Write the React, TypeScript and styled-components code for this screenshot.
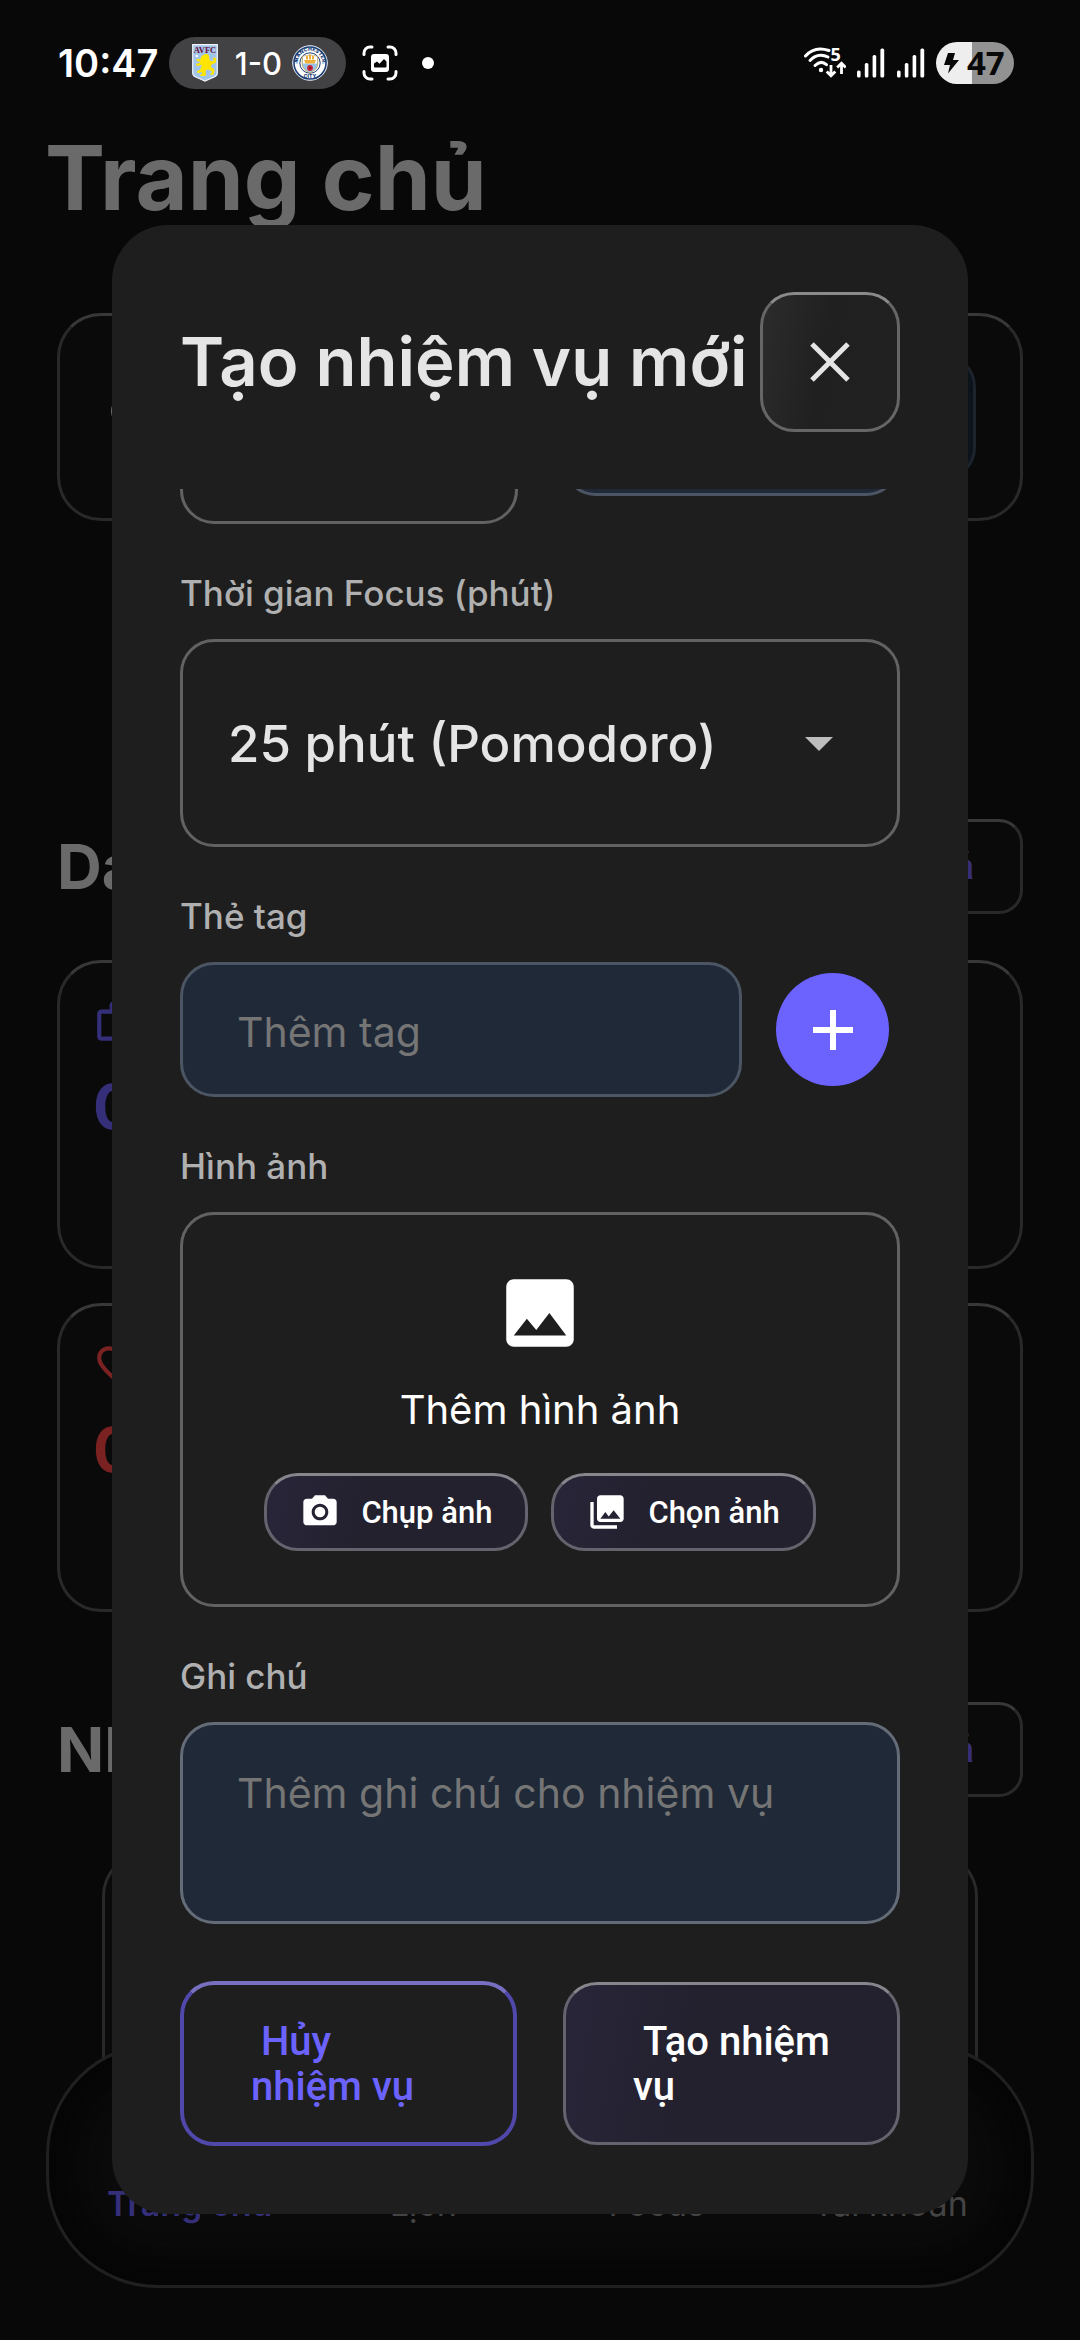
import React from "react";
import styled, { createGlobalStyle, css } from "styled-components";

const GlobalStyle = createGlobalStyle`
  *, *::before, *::after { box-sizing: border-box; }
  body { margin: 0; background: #080808; }
  h1, h2, p { margin: 0; }
  body, input, select, textarea {
    font-family: Inter, Roboto, "Noto Sans", sans-serif;
  }
  button {
    font-family: Roboto, "Noto Sans", sans-serif;
  }
`;

const Screen = styled.div`
  position: relative;
  min-height: 100vh;
  overflow: hidden;
  background: #080808;
  color: #6a6a6a;
`;

/* ---------- status bar ---------- */

const StatusBar = styled.header`
  display: flex;
  align-items: center;
  height: 122px;
  padding: 4px 66px 0 58px;
  color: #fff;
`;

const Clock = styled.time`
  font-size: 38px;
  font-weight: 600;
  line-height: 48px;
`;

const ScorePill = styled.div`
  display: flex;
  align-items: center;
  width: 177px;
  height: 52px;
  margin: 0 16px 0 11px;
  padding: 0 18px 0 23px;
  border-radius: 26px;
  background: #424144;
  font-size: 31px;
  font-weight: 500;
`;

const Score = styled.span`
  flex: 1;
  padding-left: 6px;
  text-align: center;
`;

const Dot = styled.span`
  width: 12px;
  height: 12px;
  margin-left: 24px;
  border-radius: 50%;
  background: #fff;
`;

const StatusRight = styled.div`
  display: flex;
  align-items: center;
  gap: 10px;
  margin-left: auto;
`;

const Battery = styled.div`
  display: flex;
  align-items: center;
  gap: 8px;
  width: 78px;
  height: 42px;
  padding-left: 8px;
  border-radius: 21px;
  background: linear-gradient(90deg, #eee 46%, #929292 46%);
  color: #080808;
  font-family: "Open Sans", "Noto Sans", sans-serif;
  font-size: 33px;
  font-weight: 700;
  line-height: 42px;
`;

/* ---------- home page ---------- */

const Home = styled.main`
  padding: 0 57px;
`;

const PageTitle = styled.h1`
  padding: 0 45px;
  font-size: 90px;
  font-weight: 700;
  line-height: 112px;
`;

const glassCard = css`
  border: 3px solid #292929;
  border-top-color: #383838;
  background: #0a0a0a;
`;

const SearchCard = styled.section`
  ${glassCard}
  display: flex;
  align-items: center;
  justify-content: space-between;
  height: 208px;
  margin-top: 79px;
  padding: 0 44px;
  border-radius: 44px;
`;

const SearchBox = styled.span`
  width: 200px;
  height: 128px;
  border: 3px solid #1d242d;
  border-radius: 34px;
  background: #0c131b;
`;

const SectionHead = styled.div<{ $space: number }>`
  display: flex;
  align-items: center;
  justify-content: space-between;
  margin-top: ${(p) => p.$space}px;
`;

const SectionTitle = styled.h2`
  font-size: 62px;
  font-weight: 700;
  line-height: 80px;
`;

const AllButton = styled.button`
  ${glassCard}
  height: 95px;
  padding: 0 46px;
  border-radius: 24px;
  color: #352f7a;
  font-size: 37px;
  font-weight: 600;
`;

const StatList = styled.div`
  display: grid;
  gap: 34px;
  margin-top: 46px;
`;

const StatCard = styled.article<{ $color: string }>`
  ${glassCard}
  height: 309px;
  padding: 34px 33px;
  border-radius: 44px;
  color: ${(p) => p.$color};
`;

const StatValue = styled.p`
  margin-top: 20px;
  font-size: 62px;
  font-weight: 700;
  line-height: 80px;
`;

const TaskCard = styled.article`
  ${glassCard}
  height: 300px;
  margin: 55px 45px 0;
  border-radius: 44px;
`;

const BottomNav = styled.nav`
  position: absolute;
  right: 46px;
  bottom: 52px;
  left: 46px;
  display: grid;
  grid-template-columns: repeat(4, 1fr);
  align-items: end;
  height: 245px;
  padding: 0 24px 57px;
  border: 3px solid #202020;
  border-radius: 112px;
  background: #0b0b0b;
  box-shadow: inset 0 0 40px 26px #050505;
`;

const NavLink = styled.a<{ $active?: boolean }>`
  color: ${(p) => (p.$active ? "#352f7a" : "#444")};
  font-size: 34px;
  font-weight: ${(p) => (p.$active ? 600 : 400)};
  line-height: 48px;
  text-align: center;
  text-decoration: none;
`;

/* ---------- dialog ---------- */

const Overlay = styled.div`
  position: absolute;
  inset: 0;
  display: flex;
  padding: 225px 112px 126px;
`;

const Dialog = styled.form`
  display: flex;
  flex: 1;
  flex-direction: column;
  gap: 57px;
  min-width: 0;
  padding: 67px 68px 68px;
  border-radius: 56px;
  background: #1e1e1e;
  color: #e5e5e5;
`;

const DialogHead = styled.div`
  display: flex;
  align-items: center;
  justify-content: space-between;
`;

const DialogTitle = styled.h2`
  font-size: 67px;
  font-weight: 600;
  line-height: 88px;
  white-space: nowrap;
`;

const CloseButton = styled.button`
  display: grid;
  flex: none;
  place-items: center;
  width: 140px;
  height: 140px;
  padding: 0;
  border: 3px solid #666;
  border-top-color: #8a8a8a;
  border-radius: 34px;
  background: linear-gradient(100deg, #2c2c2c, #202020 45%, #212121);
  color: #e5e5e5;
`;

const Fields = styled.div`
  display: flex;
  flex: 1;
  flex-direction: column;
  justify-content: flex-end;
  gap: 45px;
  min-height: 0;
  overflow: hidden;
`;

const Field = styled.div`
  display: flex;
  flex: none;
  flex-direction: column;
  gap: 22px;
`;

const labelText = css`
  color: #b0b0b0;
  font-size: 35px;
  font-weight: 500;
  line-height: 48px;
`;

const Label = styled.label`
  ${labelText}
`;

const GroupLabel = styled.span`
  ${labelText}
`;

const Pair = styled.div<{ $gap: number }>`
  display: grid;
  flex: none;
  grid-template-columns: 1fr 1fr;
  gap: ${(p) => p.$gap}px;
  align-items: center;
`;

const SelectWrap = styled.div`
  position: relative;
`;

const Select = styled.select`
  display: block;
  width: 100%;
  height: 208px;
  padding: 0 110px 0 45px;
  border: 3px solid #626262;
  border-radius: 34px;
  appearance: none;
  background: #1e1e1e;
  color: #e5e5e5;
  font-size: 51px;
  font-weight: 500;
`;

const Caret = styled.svg`
  position: absolute;
  top: 98px;
  right: 67px;
  pointer-events: none;
`;

const textBox = css`
  width: 100%;
  min-width: 0;
  border: 3px solid #4b5563;
  border-radius: 34px;
  background: #1f2937;
  color: #e5e5e5;
  font-size: 41px;
  &::placeholder { color: #757575; opacity: 1; }
`;

const TextInput = styled.input<{ $height: number }>`
  ${textBox}
  height: ${(p) => p.$height}px;
  padding: 4px 54px 0;
`;

const Notes = styled.textarea`
  ${textBox}
  display: block;
  height: 202px;
  padding: 40px 54px;
  border-color: #646c78;
  line-height: 56px;
  resize: none;
`;

const TagRow = styled.div`
  display: flex;
  align-items: center;
  gap: 34px;
  padding-right: 11px;
`;

const AddButton = styled.button`
  display: grid;
  flex: none;
  place-items: center;
  width: 113px;
  height: 113px;
  padding: 0;
  border: 0;
  border-radius: 50%;
  background: #6c63ff;
  color: #fff;
`;

const ImageBox = styled.div`
  display: flex;
  flex-direction: column;
  align-items: center;
  padding: 53px 0;
  border: 3px solid #626262;
  border-radius: 34px;
  color: #fff;
`;

const ImageText = styled.p`
  margin: 24px 0 35px;
  font-size: 40px;
  line-height: 56px;
`;

const ImageActions = styled.div`
  display: flex;
  gap: 23px;
`;

const violetGlass = css`
  border: 3px solid #66636f;
  border-top-color: #88868d;
  background: linear-gradient(100deg, #282539, #23212e 40%, #23212e);
  color: #fff;
`;

const ImageButton = styled.button`
  ${violetGlass}
  display: flex;
  align-items: center;
  gap: 21px;
  height: 78px;
  padding: 0 33px;
  border-radius: 34px;
  font-size: 31px;
  font-weight: 500;
`;

const FooterButton = styled.button<{ $primary?: boolean }>`
  height: 165px;
  padding: 0 0 0 67px;
  border: 4px solid #5048ab;
  border-top-color: #776fc0;
  border-radius: 34px;
  background: #1e1e1e;
  color: #6c63ff;
  font-size: 40px;
  font-weight: 500;
  line-height: 45px;
  text-align: left;
  white-space: pre-wrap;
  ${(p) =>
    p.$primary &&
    css`
      ${violetGlass}
      height: 163px;
    `}
`;

/* ---------- drawings ---------- */

const VillaCrest = () => (
  <svg width="26" height="38" viewBox="0 0 26 38" aria-hidden="true">
    <path d="M.7.7h24.6v28.5c0 3-2.5 3.8-6 5L13 37l-6.300-2.800c-3.500-1.200-6-2-6-5z" fill="#a3c5e9" stroke="#f2f5fa" strokeWidth="1.200" />
    <text x="13" y="8.500" fontFamily="Liberation Serif, serif" fontWeight="700" fontSize="8.500" textAnchor="middle" fill="#6b0f3c">AVFC</text>
    <circle cx="4.800" cy="12" r="1.200" fill="#fff" />
    <path
      d="M12 10.500c2-1 4.500-.5 5 1.500l.3 2.500c.2 1.500 1.200 2.500 2.400 2.700l2-.6c-.8-1.500-.8-2.800.8-3.300 1.200.4 2 2 1.700 3.800-.3 2-2 3-4.200 3.100-.8 1-1.200 2-.8 3l2.500 1.500c1 .8 1 2 .5 3.200l-.6 2.700-3 .3-.3-1.300 1.600-.8-.2-1.700-3.600-1.700-2 .6-.6 2.200.6 2.200-1 1.700H8.300l-.3-1.300 2.200-1-.6-2-2.800 1.500-2-1 .6-1.600 2.700-1 1.600-3.600-.2-1.300-3.300 1.200-2.300-1 .3-1.400 2.200-.1 2.500-1.800-3.500-.5-1.300-1.600 1.600-.8 2.700.6c.2-1.800.8-3.800 3.600-4.700z"
      fill="#ffe500"
    />
  </svg>
);

const CityCrest = () => (
  <svg width="36" height="36" viewBox="0 0 36 36" aria-hidden="true">
    <defs>
      <path id="ring-top" d="M5.800 18a12.200 12.200 0 0 1 24.400 0" />
    </defs>
    <circle cx="18" cy="18" r="17.300" fill="#fff" stroke="#dce6f0" strokeWidth="1" />
    <circle cx="18" cy="18" r="16" fill="#fff" stroke="#1c3f77" strokeWidth="1.600" />
    <text fontFamily="Inter, sans-serif" fontWeight="800" fontSize="5.200" fill="#1c3f77">
      <textPath href="#ring-top" startOffset="50%" textAnchor="middle">MANCHESTER</textPath>
    </text>
    <text x="18" y="33" fontFamily="Inter, sans-serif" fontWeight="800" fontSize="5" textAnchor="middle" fill="#1c3f77">CITY</text>
    <circle cx="18" cy="18" r="10.200" fill="#fff" stroke="#1c3f77" strokeWidth="1" />
    <path d="M10.200 11.500q7.800-3 15.600 0v7c0 5-4 7.500-7.800 9.500-3.800-2-7.800-4.500-7.800-9.500z" fill="#98c5e9" stroke="#c9a24a" strokeWidth=".8" />
    <path d="M11 11.800q7-2.600 14 0v6.700H11z" fill="#fff" />
    <path d="M12 15h12l-1.500 3.500h-9zM14 11h2v3.500h-2zM17 9.500h2V14.500h-2zM20 11h2v3.500h-2z" fill="#eeb13d" />
    <circle cx="18" cy="23" r="2.900" fill="#c8233a" />
    <circle cx="18" cy="23" r="1" fill="#7c1422" />
    <path d="M3.500 18h2.500M30 18h2.500" stroke="#98c5e9" strokeWidth="1.500" />
  </svg>
);

const CaptureIcon = () => (
  <svg width="36" height="36" viewBox="0 0 36 36" fill="none" aria-hidden="true">
    <path d="M2 9.500V8a6 6 0 0 1 6-6h2M26 2h2a6 6 0 0 1 6 6v1.500M34 26.500V28a6 6 0 0 1-6 6h-2M10 34H8a6 6 0 0 1-6-6v-1.500" stroke="#fff" strokeWidth="3" strokeLinecap="round" />
    <path fillRule="evenodd" d="M12 9h12a3 3 0 0 1 3 3v12a3 3 0 0 1-3 3H12a3 3 0 0 1-3-3V12a3 3 0 0 1 3-3zm0 9.500l3-2 2.500 2.300 4.500-4.800 2.500 2.500v-.5a3 3 0 0 0 0 0v5.500a1 1 0 0 1-1 1H13a1 1 0 0 1-1-1z" fill="#fff" />
  </svg>
);

const WifiIcon = () => (
  <svg width="42" height="44" viewBox="0 -6 42 44" fill="none" aria-hidden="true">
    <g stroke="#fff" strokeWidth="3" strokeLinecap="round">
      <path d="M1.500 9C8 1.500 17 .8 25 3.500" />
      <path d="M6 13.500c5-5.500 12-6.500 18-3.500" />
      <path d="M11 18.500c4-4 8-4 11.500-.8" />
    </g>
    <circle cx="17" cy="23" r="2.200" fill="#fff" />
    <text x="26.500" y="14" fontFamily="Open Sans, sans-serif" fontWeight="700" fontSize="18" fill="#fff">5</text>
    <g stroke="#fff" strokeWidth="2.800">
      <path d="M27 18v11M22.700 24.500l4.300 4.300 4.300-4.300M37.500 27V17M33.200 20.500l4.300-4.300 4.300 4.300" />
    </g>
  </svg>
);

const SignalIcon = () => (
  <svg width="30" height="30" viewBox="0 0 30 30" aria-hidden="true">
    <g fill="#fff">
      <rect x="1" y="22.500" width="3.600" height="7" rx="1.500" />
      <rect x="8.800" y="15" width="3.600" height="14.500" rx="1.500" />
      <rect x="16.600" y="7" width="3.600" height="22.500" rx="1.500" />
      <rect x="24.400" y=".5" width="3.800" height="29" rx="1.500" />
    </g>
  </svg>
);

const BoltIcon = () => (
  <svg width="15" height="22" viewBox="0 0 15 22" aria-hidden="true">
    <path d="M4 1h7L9 8h6L4 21.500l2-8.500H0z" fill="#080808" />
  </svg>
);

const icons = {
  work: "M14 6V4h-4v2h4zM4 8v11h16V8H4zm16-2c1.110 0 2 .89 2 2v11c0 1.110-.89 2-2 2H4c-1.110 0-2-.89-2-2l.01-11c0-1.110.88-2 1.990-2h4V4c0-1.110.89-2 2-2h4c1.110 0 2 .89 2 2v2h4z",
  heart:
    "M16.500 3c-1.740 0-3.410.81-4.500 2.090C10.910 3.810 9.240 3 7.500 3 4.420 3 2 5.420 2 8.500c0 3.780 3.400 6.860 8.550 11.540L12 21.350l1.450-1.320C18.600 15.360 22 12.280 22 8.500 22 5.420 19.580 3 16.500 3zm-4.400 15.550l-.1.100-.1-.1C7.140 14.240 4 11.390 4 8.500 4 6.500 5.500 5 7.500 5c1.540 0 3.040.99 3.570 2.360h1.870C13.460 5.990 14.960 5 16.500 5c2 0 3.500 1.500 3.500 3.500 0 2.890-3.140 5.740-7.900 10.050z",
  search:
    "M15.500 14h-.79l-.28-.27C15.410 12.590 16 11.110 16 9.500 16 5.910 13.090 3 9.500 3S3 5.910 3 9.500 5.910 16 9.500 16c1.610 0 3.090-.59 4.230-1.570l.27.28v.79l5 4.990L20.490 19l-4.990-5zm-6 0C7.010 14 5 11.990 5 9.500S7.010 5 9.500 5 14 7.010 14 9.500 11.990 14 9.500 14z",
  image:
    "M21 19V5c0-1.100-.9-2-2-2H5c-1.100 0-2 .9-2 2v14c0 1.100.9 2 2 2h14c1.100 0 2-.9 2-2zM8.500 13.500l2.500 3.010L14.500 12l4.500 6H5l3.500-4.500z",
  camera:
    "M12 8.800a3.200 3.200 0 1 0 0 6.400 3.200 3.200 0 1 0 0-6.400zM9 2L7.170 4H4c-1.100 0-2 .9-2 2v12c0 1.100.9 2 2 2h16c1.100 0 2-.9 2-2V6c0-1.100-.9-2-2-2h-3.170L15 2H9zm3 15c-2.760 0-5-2.240-5-5s2.240-5 5-5 5 2.240 5 5-2.240 5-5 5z",
  library:
    "M22 16V4c0-1.100-.9-2-2-2H8c-1.100 0-2 .9-2 2v12c0 1.100.9 2 2 2h12c1.100 0 2-.9 2-2zm-11-4l2.030 2.710L16 11l4 5H8l3-4zM2 6v14c0 1.100.9 2 2 2h14v-2H4V6H2z",
};

const Icon = ({ name, size }: { name: keyof typeof icons; size: number }) => (
  <svg width={size} height={size} viewBox="0 0 24 24" fill="currentColor" aria-hidden="true">
    <path d={icons[name]} />
  </svg>
);

const BlockIcon = styled.div`
  height: 50px;
  line-height: 0;
`;

export default function App() {
  return (
    <Screen>
      <GlobalStyle />
      <StatusBar>
        <Clock>10:47</Clock>
        <ScorePill>
          <VillaCrest />
          <Score>1-0</Score>
          <CityCrest />
        </ScorePill>
        <CaptureIcon />
        <Dot />
        <StatusRight>
          <WifiIcon />
          <SignalIcon />
          <SignalIcon />
          <Battery>
            <BoltIcon />
            <span>47</span>
          </Battery>
        </StatusRight>
      </StatusBar>

      <PageTitle>Trang chủ</PageTitle>
      <Home>
        <SearchCard>
          <Icon name="search" size={56} />
          <SearchBox />
        </SearchCard>

        <SectionHead $space={298}>
          <SectionTitle>Da</SectionTitle>
          <AllButton type="button">Tất cả</AllButton>
        </SectionHead>
        <StatList>
          <StatCard $color="#352f7a">
            <BlockIcon><Icon name="work" size={50} /></BlockIcon>
            <StatValue>0</StatValue>
          </StatCard>
          <StatCard $color="#7a2121">
            <BlockIcon><Icon name="heart" size={50} /></BlockIcon>
            <StatValue>0</StatValue>
          </StatCard>
        </StatList>

        <SectionHead $space={90}>
          <SectionTitle>Nh</SectionTitle>
          <AllButton type="button">Tất cả</AllButton>
        </SectionHead>
        <TaskCard />
      </Home>

      <BottomNav>
        <NavLink href="#home" $active>Trang chủ</NavLink>
        <NavLink href="#calendar">Lịch</NavLink>
        <NavLink href="#focus">Focus</NavLink>
        <NavLink href="#account">Tài khoản</NavLink>
      </BottomNav>

      <Overlay>
        <Dialog role="dialog" aria-labelledby="dialog-title" onSubmit={(e: React.FormEvent) => e.preventDefault()}>
          <DialogHead>
            <DialogTitle id="dialog-title">Tạo nhiệm vụ mới</DialogTitle>
            <CloseButton type="button" aria-label="Đóng">
              <svg width="40" height="40" viewBox="0 0 40 40" aria-hidden="true">
                <path d="M2 2l36 36M38 2L2 38" stroke="currentColor" strokeWidth="5" />
              </svg>
            </CloseButton>
          </DialogHead>

          <Fields>
            <Pair $gap={44}>
              <Select aria-label="Ưu tiên" />
              <TextInput $height={152} aria-label="Hạn chót" />
            </Pair>

            <Field>
              <Label htmlFor="focus-time">Thời gian Focus (phút)</Label>
              <SelectWrap>
                <Select id="focus-time" defaultValue="25">
                  <option value="25">25 phút (Pomodoro)</option>
                </Select>
                <Caret width="28" height="14" viewBox="0 0 28 14" aria-hidden="true">
                  <path d="M0 0h28L14 14z" fill="#bdbdbd" />
                </Caret>
              </SelectWrap>
            </Field>

            <Field>
              <Label htmlFor="tag">Thẻ tag</Label>
              <TagRow>
                <TextInput $height={135} id="tag" placeholder="Thêm tag" />
                <AddButton type="button" aria-label="Thêm tag">
                  <svg width="40" height="40" viewBox="0 0 40 40" aria-hidden="true">
                    <path d="M20 0v40M0 20h40" stroke="currentColor" strokeWidth="6" />
                  </svg>
                </AddButton>
              </TagRow>
            </Field>

            <Field role="group" aria-labelledby="image-label">
              <GroupLabel id="image-label">Hình ảnh</GroupLabel>
              <ImageBox>
                <Icon name="image" size={90} />
                <ImageText>Thêm hình ảnh</ImageText>
                <ImageActions>
                  <ImageButton type="button">
                    <Icon name="camera" size={40} />
                    Chụp ảnh
                  </ImageButton>
                  <ImageButton type="button">
                    <Icon name="library" size={40} />
                    Chọn ảnh
                  </ImageButton>
                </ImageActions>
              </ImageBox>
            </Field>

            <Field>
              <Label htmlFor="notes">Ghi chú</Label>
              <Notes id="notes" placeholder="Thêm ghi chú cho nhiệm vụ" />
            </Field>
          </Fields>

          <Pair $gap={46}>
            <FooterButton type="button">{" Hủy\nnhiệm vụ"}</FooterButton>
            <FooterButton type="submit" $primary>{" Tạo nhiệm\nvụ"}</FooterButton>
          </Pair>
        </Dialog>
      </Overlay>
    </Screen>
  );
}
